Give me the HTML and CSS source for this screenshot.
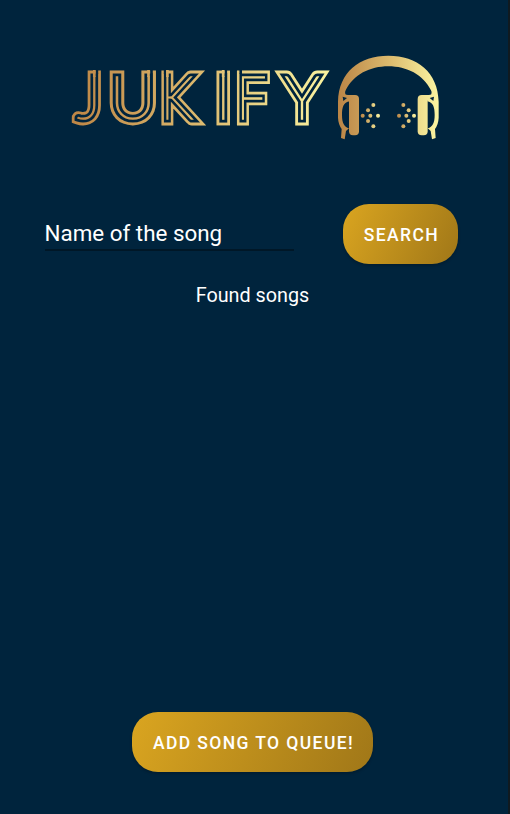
FILE: index.html
```html
<!DOCTYPE html>
<html lang="en">
<head>
<meta charset="utf-8">
<title>Jukify</title>
<link rel="stylesheet" href="styles.css">
</head>
<body>
<main class="screen">
  <svg class="logo" viewBox="65 50 380 95" role="img" aria-label="Jukify">
    <defs>
      <linearGradient id="word" gradientUnits="userSpaceOnUse" x1="70" y1="0" x2="328" y2="0">
        <stop offset="0" stop-color="#bd8545"/><stop offset=".5" stop-color="#dcb96e"/><stop offset="1" stop-color="#faf3a0"/>
      </linearGradient>
      <linearGradient id="phones" gradientUnits="userSpaceOnUse" x1="24" y1="0" x2="326" y2="0">
        <stop offset="0" stop-color="#bb8546"/><stop offset=".5" stop-color="#dbb96d"/><stop offset="1" stop-color="#fbf5a2"/>
      </linearGradient>
      <linearGradient id="dotsLeft" gradientUnits="userSpaceOnUse" x1="92" y1="0" x2="150" y2="0">
        <stop stop-color="#bb8546"/><stop offset="1" stop-color="#fbf5a2"/>
      </linearGradient>
      <linearGradient id="dotsRight" gradientUnits="userSpaceOnUse" x1="200" y1="0" x2="258" y2="0">
        <stop stop-color="#bb8546"/><stop offset="1" stop-color="#fbf5a2"/>
      </linearGradient>
    </defs>
    <g class="rim"><text id="name" class="wordmark" y="118.6"><tspan x="77.2" textLength="23.7" lengthAdjust="spacingAndGlyphs">J</tspan><tspan x="109.7" textLength="46.2" lengthAdjust="spacingAndGlyphs">U</tspan><tspan x="161" textLength="32" lengthAdjust="spacingAndGlyphs">K</tspan><tspan x="215.9">I</tspan><tspan x="236.6" textLength="29.8" lengthAdjust="spacingAndGlyphs">F</tspan><tspan x="285" textLength="34" lengthAdjust="spacingAndGlyphs">Y</tspan></text></g>
    <use href="#name" class="groove"/>
    <use href="#name" class="core"/>
    <!-- open slots at the tops of the stems -->
    <path class="slot" d="M96.9 69V74M151.5 69V74M225.8 69V74M165.1 69V74M240.7 69V74"/>
    <path class="cap" d="M94.3 70V77M148.5 70V77M223.2 70V77M167.4 70V77"/>
    <g transform="translate(330 45) scale(.33333)">
      <path fill="url(#phones)" fill-rule="evenodd" d="M24 170C26 82 88 32 175 32S324 82 326 170V218Q325 238 315 252L317 279 306 283 302 258 293 250V168L278 150H292Q301 151 304 148Q307 143 303 136C280 89 230 64 175 64S70 89 47 136Q43 143 46 148Q49 151 58 150H72L57 168V250L48 258 44 283 33 279 35 252Q25 238 24 218ZM38 155L40 168 51 159ZM312 155L310 168 299 159ZM57 169C40 173 36 188 36 210C36 233 42 246 57 250ZM293 169C310 173 314 188 314 210C314 233 308 246 293 250Z"/>
      <rect fill="url(#phones)" x="57" y="150" width="30" height="121" rx="12"/>
      <rect fill="url(#phones)" x="263" y="150" width="30" height="121" rx="12"/>
      <g fill="url(#dotsLeft)"><circle cx="98" cy="212" r="6"/><circle cx="114" cy="196" r="6"/><circle cx="114" cy="228" r="6"/><circle cx="121" cy="212" r="6"/><circle cx="130" cy="180" r="6"/><circle cx="130" cy="244" r="6"/><circle cx="144" cy="212" r="6"/></g>
      <g fill="url(#dotsRight)"><circle cx="207" cy="212" r="6"/><circle cx="220" cy="180" r="6"/><circle cx="220" cy="244" r="6"/><circle cx="229" cy="212" r="6"/><circle cx="236" cy="196" r="6"/><circle cx="236" cy="228" r="6"/><circle cx="252" cy="212" r="6"/></g>
    </g>
  </svg>
  <form class="search">
    <input class="field" type="text" placeholder="Name of the song" aria-label="Name of the song">
    <button class="button" type="button">SEARCH</button>
  </form>
  <h1 class="heading">Found songs</h1>
  <button class="button add" type="button">ADD SONG TO QUEUE!</button>
</main>
</body>
</html>
```
FILE: styles.css
```css
* { box-sizing: border-box; }
body { margin: 0; font-family: Roboto, "Liberation Sans", sans-serif; background: #00243d; color: #fff; }
.screen {
  display: flex; flex-direction: column; align-items: center;
  height: 814px; padding: 50px 4px 42px 0;
  border-right: 2px solid #101a20;
}
.logo { width: 380px; height: 95px; flex: none; margin-left: 6px; }
.wordmark { font: 100 59.6px Lato, sans-serif; stroke-miterlimit: 3; }
.rim { fill: url(#word); stroke: url(#word); stroke-width: 12.8; }
.groove { fill: #00243d; stroke: #00243d; stroke-width: 7.2; }
.core { fill: url(#word); stroke: url(#word); stroke-width: 1.6; }
.slot { stroke: #00243d; stroke-width: 2.6; }
.cap { stroke: url(#word); stroke-width: 2.7; }
.search { display: flex; align-items: flex-start; width: 413px; margin: 59px 1px 0 0; }
.field {
  width: 249px; height: 47px; margin: 0 49px 0 0; padding: 13px 0 0;
  border: 0; border-bottom: 2px solid #001727; background: none;
  font: 22.4px/30px Roboto, sans-serif; color: #fff; outline: 0; text-indent: -.5px;
}
.field::placeholder { color: #fff; opacity: 1; }
.button {
  width: 115px; height: 60px; padding: 2px 0 0 2px; border: 0; border-radius: 26px;
  background: linear-gradient(115deg, #daa520, #a07718);
  box-shadow: 0 2px 3px #0003;
  font: 500 17.5px Roboto, sans-serif; letter-spacing: 1.4px; color: #fff; white-space: nowrap;
}
.heading { margin: 19px 0 0 1px; font-size: 19.8px; line-height: 26px; font-weight: 400; }
.add { width: 241px; margin-top: auto; margin-left: 1px; }
```
